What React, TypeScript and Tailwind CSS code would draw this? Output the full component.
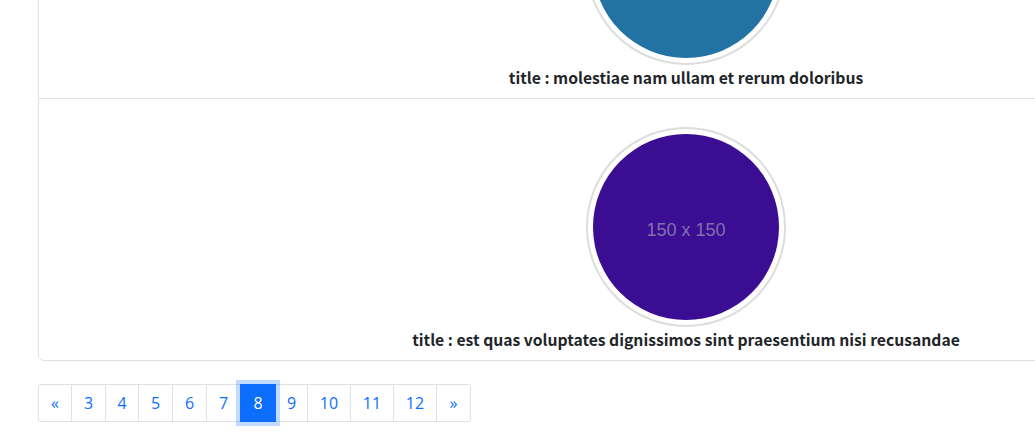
const posts = [
  { id: 1, title: "molestiae nam ullam et rerum doloribus", color: "bg-[#2272a3]" },
  { id: 2, title: "est quas voluptates dignissimos sint praesentium nisi recusandae", color: "bg-[#3a0d93]" },
];

const pages = [
  { label: "«", w: "w-[34px]" },
  { label: "3", w: "w-[35px]" },
  { label: "4", w: "w-[34px]" },
  { label: "5", w: "w-[35px]" },
  { label: "6", w: "w-[35px]" },
  { label: "7", w: "w-[35px]" },
  { label: "8", w: "w-[36px]", active: true },
  { label: "9", w: "w-[33px]" },
  { label: "10", w: "w-[44px]" },
  { label: "11", w: "w-[44px]" },
  { label: "12", w: "w-[44px]" },
  { label: "»", w: "w-[35px]" },
];

function PostItem({ title, color }: { title: string; color: string }) {
  return (
    <li className="flex flex-col items-center border-b border-[#dee2e6] pt-[28px] pb-[8px] last:border-b-0">
      <div className="w-[200px] h-[200px] rounded-full border-2 border-[#dddddd] bg-white p-[5px]">
        <div
          className={`w-full h-full rounded-full ${color} flex items-center justify-center pt-[6px] text-[18px] text-[#8170ad] font-['Liberation_Sans',Arial,sans-serif]`}
        >
          150 x 150
        </div>
      </div>
      <p className="mt-px leading-6 text-[15.7px] font-bold text-[#212529]">title : {title}</p>
    </li>
  );
}

export default function App() {
  return (
    <div className="w-[1035px] h-[437px] overflow-hidden bg-white font-['Noto_Sans_CJK_KR','Noto_Sans',sans-serif]">
      <div className="ml-[38px] w-[1296px]">
        <ul className="-mt-[164px] border border-[#dee2e6] rounded-md">
          {posts.map((p) => (
            <PostItem key={p.id} title={p.title} color={p.color} />
          ))}
        </ul>

        <ul className="mt-[23px] flex">
          {pages.map((p, i) => (
            <li
              key={p.label}
              className={`${p.w} h-[38px] flex items-center justify-center border text-[16px] ${
                i > 0 ? "-ml-px" : "rounded-l-[3px]"
              } ${i === pages.length - 1 ? "rounded-r-[3px]" : ""} ${
                p.active
                  ? "relative z-10 bg-[#0d6efd] border-[#0d6efd] text-white shadow-[0_0_0_4px_rgba(13,110,253,0.25)]"
                  : "border-[#dee2e6] text-[#0d6efd] bg-white"
              } font-['Open_Sans',sans-serif]`}
            >
              {p.label}
            </li>
          ))}
        </ul>
      </div>
    </div>
  );
}
